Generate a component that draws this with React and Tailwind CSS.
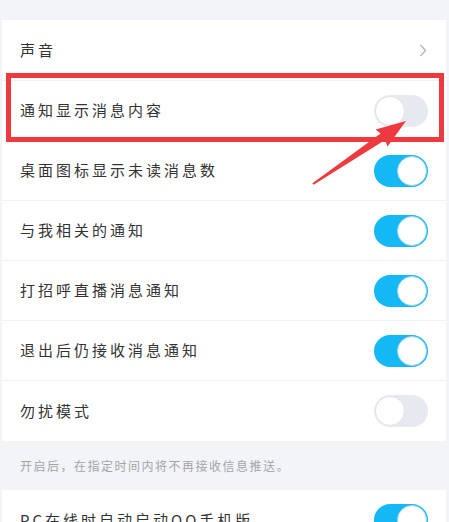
import React from "react";

function Toggle({ on }) {
  return on ? (
    <div className="relative w-[54px] h-[32px] rounded-full bg-[#14b8f4] shrink-0">
      <div className="absolute right-[1px] top-[1px] w-[30px] h-[30px] rounded-full bg-white border border-[#9fd3e6]" />
    </div>
  ) : (
    <div className="relative w-[54px] h-[32px] rounded-full bg-[#e7e9f1] shrink-0">
      <div className="absolute left-[1px] top-[1px] w-[30px] h-[30px] rounded-full bg-white border border-[#e3e4ea]" />
    </div>
  );
}

function Row({ label, on, height = "h-[60px]", last }) {
  return (
    <div
      className={`${height} flex items-center justify-between pl-[18px] pr-[18px] ${
        last ? "" : "border-b border-[#f1f2f5]"
      }`}
    >
      <span className="text-[15px] tracking-[3px] text-[#333333]">{label}</span>
      <Toggle on={on} />
    </div>
  );
}

export default function App() {
  return (
    <div
      className="relative w-[449px] h-[522px] overflow-hidden bg-[#f3f4f8]"
      style={{ fontFamily: '"Noto Sans CJK SC", "Noto Sans", sans-serif' }}
    >
      <div className="h-[20px]" />
      <div className="bg-white ml-[2px] mr-[3px]">
        <div className="h-[61px] flex items-center justify-between pl-[18px] pr-[19px] border-b border-[#f1f2f5]">
          <span className="text-[15px] tracking-[3px] text-[#333333]">声音</span>
          <svg width="8" height="13" viewBox="0 0 8 13">
            <polyline points="1.5,1 6.5,6.5 1.5,12" fill="none" stroke="#b6b6bb" strokeWidth="1.4" />
          </svg>
        </div>
        <Row label="通知显示消息内容" on={false} />
        <Row label="桌面图标显示未读消息数" on />
        <Row label="与我相关的通知" on />
        <Row label="打招呼直播消息通知" on />
        <Row label="退出后仍接收消息通知" on />
        <Row label="勿扰模式" on={false} last />
      </div>
      <div className="h-[49px] flex items-center pl-[20px] text-[12px] tracking-[1.5px] text-[#a3a4ab]">
        开启后，在指定时间内将不再接收信息推送。
      </div>
      <div className="bg-white ml-[2px] mr-[3px]">
        <Row label="PC在线时自动启动QQ手机版" on last />
      </div>

      <div className="absolute left-[6px] top-[73px] w-[438px] h-[69px] border-[5px] border-[#ee3a3e]" />
      <svg className="absolute left-0 top-0" width="449" height="522" viewBox="0 0 449 522">
        <polygon
          points="406,121 375.6,129.5 380.6,133.4 312.4,183.2 313.6,184.8 385.1,140 387.5,146.5"
          fill="#ee3a3e"
        />
      </svg>
    </div>
  );
}
